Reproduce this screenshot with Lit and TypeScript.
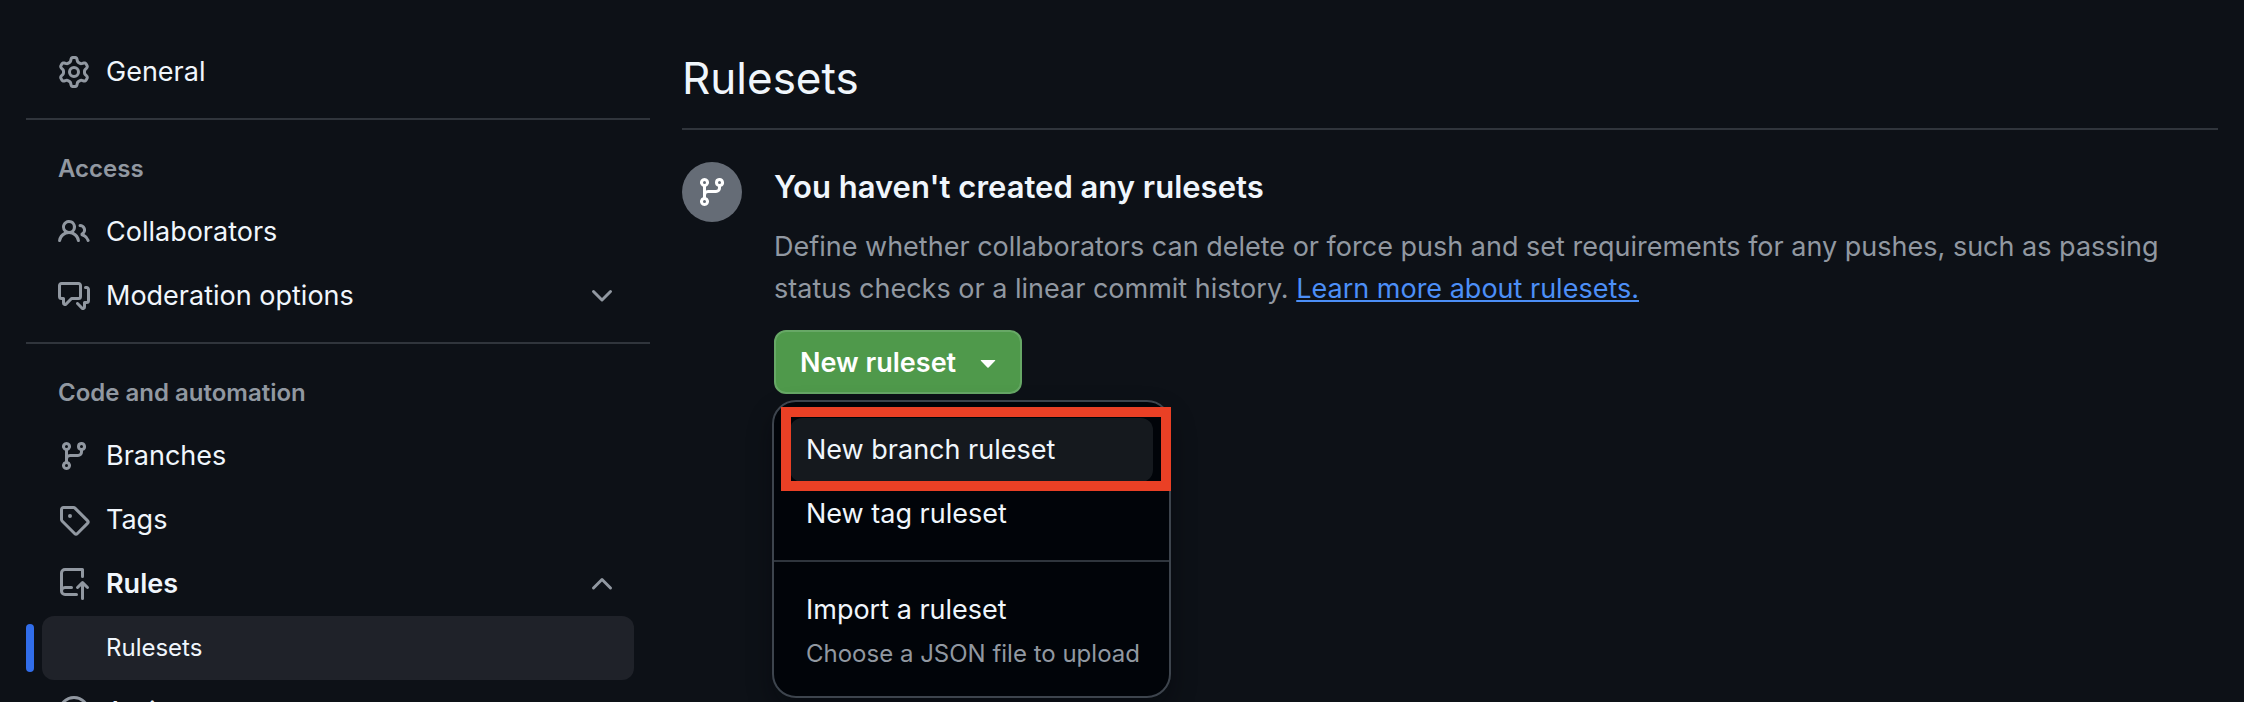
import { LitElement, html, css, svg, nothing } from "lit";
import { customElement, property, state } from "lit/decorators.js";

const ICONS: Record<string, string> = {
  gear: "M8 0a8.2 8.2 0 0 1 .701.031C9.444.095 9.99.645 10.16 1.29l.288 1.107c.018.066.079.158.212.224.231.114.454.243.668.386.123.082.233.09.299.071l1.103-.303c.644-.176 1.392.021 1.82.63.27.385.506.792.704 1.218.315.675.111 1.422-.364 1.891l-.814.806c-.049.048-.098.147-.088.294.016.257.016.515 0 .772-.01.147.038.246.088.294l.814.806c.475.469.679 1.216.364 1.891a7.977 7.977 0 0 1-.704 1.217c-.428.61-1.176.807-1.82.63l-1.102-.302c-.067-.019-.177-.011-.3.071a5.909 5.909 0 0 1-.668.386c-.133.066-.194.158-.211.224l-.29 1.106c-.168.646-.715 1.196-1.458 1.26a8.006 8.006 0 0 1-1.402 0c-.743-.064-1.289-.614-1.458-1.26l-.289-1.106c-.018-.066-.079-.158-.212-.224a5.738 5.738 0 0 1-.668-.386c-.123-.082-.233-.09-.299-.071l-1.103.303c-.644.176-1.392-.021-1.82-.63a8.12 8.12 0 0 1-.704-1.218c-.315-.675-.111-1.422.363-1.891l.815-.806c.05-.048.098-.147.088-.294a6.214 6.214 0 0 1 0-.772c.01-.147-.038-.246-.088-.294l-.815-.806C.635 6.045.431 5.298.746 4.623a7.92 7.92 0 0 1 .704-1.217c.428-.61 1.176-.807 1.82-.63l1.102.302c.067.019.177.011.3-.071.214-.143.437-.272.668-.386.133-.066.194-.158.211-.224l.29-1.106C6.009.645 6.556.095 7.299.03 7.53.01 7.764 0 8 0Zm-.571 1.525c-.036.003-.108.036-.137.146l-.289 1.105c-.147.561-.549.967-.998 1.189-.173.086-.34.183-.5.29-.417.278-.97.423-1.529.27l-1.103-.303c-.109-.03-.175.016-.195.045-.22.312-.412.644-.573.99-.014.031-.021.11.059.19l.815.806c.411.406.562.957.53 1.456a4.709 4.709 0 0 0 0 .582c.032.499-.119 1.05-.53 1.456l-.815.806c-.081.08-.073.159-.059.19.162.346.353.677.573.989.02.03.085.076.195.046l1.102-.303c.56-.153 1.113-.008 1.53.27.161.107.328.204.501.29.447.222.85.629.997 1.189l.289 1.105c.029.109.101.143.137.146a6.6 6.6 0 0 0 1.142 0c.036-.003.108-.036.137-.146l.289-1.105c.147-.561.549-.967.998-1.189.173-.086.34-.183.5-.29.417-.278.97-.423 1.529-.27l1.103.303c.109.029.175-.016.195-.045.22-.313.411-.644.573-.99.014-.031.021-.11-.059-.19l-.815-.806c-.411-.406-.562-.957-.53-1.456a4.709 4.709 0 0 0 0-.582c-.032-.499.119-1.05.53-1.456l.815-.806c.081-.08.073-.159.059-.19a6.464 6.464 0 0 0-.573-.989c-.02-.03-.085-.076-.195-.046l-1.102.303c-.56.153-1.113.008-1.53-.27a4.44 4.44 0 0 0-.501-.29c-.447-.222-.85-.629-.997-1.189l-.289-1.105c-.029-.11-.101-.143-.137-.146a6.6 6.6 0 0 0-1.142 0ZM11 8a3 3 0 1 1-6 0 3 3 0 0 1 6 0ZM9.5 8a1.5 1.5 0 1 0-3.001.001A1.5 1.5 0 0 0 9.5 8Z",
  people:
    "M2 5.5a3.5 3.5 0 1 1 5.898 2.549 5.508 5.508 0 0 1 3.034 4.084.75.75 0 1 1-1.482.235 4 4 0 0 0-7.9 0 .75.75 0 0 1-1.482-.236A5.507 5.507 0 0 1 3.102 8.05 3.493 3.493 0 0 1 2 5.5ZM11 4a3.001 3.001 0 0 1 2.22 5.018 5.01 5.01 0 0 1 2.56 3.012.749.749 0 0 1-.885.954.752.752 0 0 1-.549-.514 3.507 3.507 0 0 0-2.522-2.372.75.75 0 0 1-.574-.73v-.352a.75.75 0 0 1 .416-.672A1.5 1.5 0 0 0 11 5.5.75.75 0 0 1 11 4Zm-5.5-.5a2 2 0 1 0-.001 3.999A2 2 0 0 0 5.5 3.5Z",
  discussion:
    "M1.75 1h8.5c.966 0 1.75.784 1.75 1.75v5.5A1.75 1.75 0 0 1 10.25 10H7.061l-2.574 2.573A1.458 1.458 0 0 1 2 11.543V10h-.25A1.75 1.75 0 0 1 0 8.25v-5.5C0 1.784.784 1 1.75 1ZM1.5 2.75v5.5c0 .138.112.25.25.25h1a.75.75 0 0 1 .75.75v2.19l2.72-2.72a.749.749 0 0 1 .53-.22h3.5a.25.25 0 0 0 .25-.25v-5.5a.25.25 0 0 0-.25-.25h-8.5a.25.25 0 0 0-.25.25Zm13 2a.25.25 0 0 0-.25-.25h-.5a.75.75 0 0 1 0-1.5h.5c.966 0 1.75.784 1.75 1.75v5.5A1.75 1.75 0 0 1 14.25 12H14v1.543a1.458 1.458 0 0 1-2.487 1.03L9.22 12.28a.749.749 0 0 1 .326-1.275.749.749 0 0 1 .734.215l2.22 2.22v-2.19a.75.75 0 0 1 .75-.75h1a.25.25 0 0 0 .25-.25Z",
  branch:
    "M9.5 3.25a2.25 2.25 0 1 1 3 2.122V6A2.5 2.5 0 0 1 10 8.5H6a1 1 0 0 0-1 1v1.128a2.251 2.251 0 1 1-1.5 0V5.372a2.25 2.25 0 1 1 1.5 0v1.836A2.493 2.493 0 0 1 6 7h4a1 1 0 0 0 1-1v-.628A2.25 2.25 0 0 1 9.5 3.25Zm-6 0a.75.75 0 1 0 1.5 0 .75.75 0 0 0-1.5 0Zm8.25-.75a.75.75 0 1 0 0 1.5.75.75 0 0 0 0-1.5ZM4.25 12a.75.75 0 1 0 0 1.5.75.75 0 0 0 0-1.5Z",
  tag: "M1 7.775V2.75C1 1.784 1.784 1 2.75 1h5.025c.464 0 .91.184 1.238.513l6.25 6.25a1.75 1.75 0 0 1 0 2.474l-5.026 5.026a1.75 1.75 0 0 1-2.474 0l-6.25-6.25A1.752 1.752 0 0 1 1 7.775Zm1.5 0c0 .066.026.13.073.177l6.25 6.25a.25.25 0 0 0 .354 0l5.025-5.025a.25.25 0 0 0 0-.354l-6.25-6.25a.25.25 0 0 0-.177-.073H2.75a.25.25 0 0 0-.25.25ZM6 5a1 1 0 1 1 0 2 1 1 0 0 1 0-2Z",
  push: "M1 2.5A2.5 2.5 0 0 1 3.5 0h8.75a.75.75 0 0 1 .75.75v3.5a.75.75 0 0 1-1.5 0V1.5h-8a1 1 0 0 0-1 1v6.708A2.492 2.492 0 0 1 3.5 9h3.25a.75.75 0 0 1 0 1.5H3.5a1 1 0 1 0 0 2h5.75a.75.75 0 0 1 0 1.5H3.5A2.5 2.5 0 0 1 1 11.5v-9Zm13.23 7.79h-.001l-1.224-1.224v6.184a.75.75 0 0 1-1.5 0V9.066L10.28 10.29a.75.75 0 0 1-1.06-1.061l2.505-2.504a.75.75 0 0 1 1.06 0L15.29 9.23a.751.751 0 0 1-.018 1.042.751.751 0 0 1-1.042.018Z",
  play: "M8 0a8 8 0 1 1 0 16A8 8 0 0 1 8 0ZM1.5 8a6.5 6.5 0 1 0 13 0 6.5 6.5 0 0 0-13 0Zm4.879-2.773 4.264 2.559a.25.25 0 0 1 0 .428l-4.264 2.559A.25.25 0 0 1 6 10.559V5.442a.25.25 0 0 1 .379-.215Z",
  down: "M12.78 5.22a.749.749 0 0 1 0 1.06l-4.25 4.25a.749.749 0 0 1-1.06 0L3.22 6.28a.749.749 0 1 1 1.06-1.06L8 8.939l3.72-3.719a.749.749 0 0 1 1.06 0Z",
  up: "M3.22 10.53a.749.749 0 0 1 0-1.06l4.25-4.25a.749.749 0 0 1 1.06 0l4.25 4.25a.749.749 0 1 1-1.06 1.06L8 6.811 4.28 10.53a.749.749 0 0 1-1.06 0Z",
  caret:
    "m4.427 7.427 3.396 3.396a.25.25 0 0 0 .354 0l3.396-3.396A.25.25 0 0 0 11.396 7H4.604a.25.25 0 0 0-.177.427Z",
};

@customElement("oct-icon")
class OctIcon extends LitElement {
  @property() name = "";

  static styles = css`
    :host {
      display: block;
      flex: none;
      width: 32px;
      height: 32px;
    }
    svg {
      display: block;
      width: 100%;
      height: 100%;
      fill: currentColor;
    }
  `;

  render() {
    return html`<svg viewBox="0 0 16 16" aria-hidden="true">
      ${svg`<path d=${ICONS[this.name]}></path>`}
    </svg>`;
  }
}

interface NavItem {
  label: string;
  icon: string;
  open?: boolean;
  children?: string[];
}

interface NavGroup {
  title?: string;
  items: NavItem[];
}

const GROUPS: NavGroup[] = [
  { items: [{ label: "General", icon: "gear" }] },
  {
    title: "Access",
    items: [
      { label: "Collaborators", icon: "people" },
      { label: "Moderation options", icon: "discussion", children: [] },
    ],
  },
  {
    title: "Code and automation",
    items: [
      { label: "Branches", icon: "branch" },
      { label: "Tags", icon: "tag" },
      { label: "Rules", icon: "push", open: true, children: ["Rulesets"] },
      { label: "Actions", icon: "play" },
    ],
  },
];

@customElement("settings-nav")
class SettingsNav extends LitElement {
  static styles = css`
    * {
      box-sizing: border-box;
    }
    :host {
      display: block;
      padding-top: 40px;
    }
    ul {
      list-style: none;
      margin: 0;
      padding: 0;
    }
    .group + .group {
      margin-top: 14px;
      border-top: 2px solid #30353c;
      padding-top: 18px;
    }
    .title {
      margin: 0;
      padding: 0 32px;
      font-size: 24px;
      font-weight: 600;
      line-height: 62px;
      color: #9198a1;
    }
    .item {
      display: flex;
      align-items: center;
      gap: 16px;
      width: calc(100% - 32px);
      min-height: 64px;
      margin: 0 16px;
      padding: 0 16px;
      border: 0;
      border-radius: 12px;
      background: none;
      font: inherit;
      font-size: 27px;
      line-height: 40px;
      color: #f0f6fc;
      text-align: left;
      text-decoration: none;
    }
    .item oct-icon {
      color: #9198a1;
    }
    .label {
      flex: 1;
    }
    .open {
      font-weight: 600;
    }
    .sub {
      display: flex;
      align-items: center;
    }
    .current::before {
      content: "";
      width: 8px;
      height: 48px;
      border-radius: 4px;
      background: #316dea;
    }
    .sub .item {
      flex: 1;
      margin-left: 8px;
      padding-left: 64px;
      background: #1f2229;
      font-size: 24px;
    }
  `;

  private renderItem(item: NavItem) {
    const body = html`<oct-icon name=${item.icon}></oct-icon>
      <span class="label">${item.label}</span>`;
    if (!item.children) {
      return html`<li><a class="item" href="#">${body}</a></li>`;
    }
    return html`<li>
      <button
        class="item ${item.open ? "open" : ""}"
        type="button"
        aria-expanded=${item.open ? "true" : "false"}
      >
        ${body}<oct-icon name=${item.open ? "up" : "down"}></oct-icon>
      </button>
      ${item.open
        ? html`<ul>
            ${item.children.map(
              (child) => html`<li class="sub current">
                <a class="item" href="#" aria-current="page">${child}</a>
              </li>`
            )}
          </ul>`
        : nothing}
    </li>`;
  }

  render() {
    return html`<nav aria-label="Settings">
      ${GROUPS.map(
        (group) => html`<section class="group">
          ${group.title ? html`<h2 class="title">${group.title}</h2>` : nothing}
          <ul>
            ${group.items.map((item) => this.renderItem(item))}
          </ul>
        </section>`
      )}
    </nav>`;
  }
}

@customElement("ruleset-menu")
class RulesetMenu extends LitElement {
  @state() private open = true;

  static styles = css`
    * {
      box-sizing: border-box;
    }
    :host {
      display: block;
      position: relative;
      width: max-content;
    }
    button {
      font: inherit;
      text-align: left;
      cursor: pointer;
    }
    .trigger {
      display: flex;
      align-items: center;
      gap: 16px;
      height: 64px;
      padding: 0 16px 0 24px;
      border: 2px solid #67a866;
      border-radius: 12px;
      background: #4f994b;
      color: #fff;
      font-size: 27px;
      font-weight: 600;
    }
    .menu {
      position: absolute;
      top: calc(100% + 6px);
      left: -2px;
      width: 399px;
      margin: 0;
      padding: 0;
      border: 2px solid #3d444d;
      border-radius: 24px;
      background: #010409;
      box-shadow: 0 12px 24px rgba(1, 4, 9, 0.4);
    }
    .part {
      padding: 16px 16px 14px;
    }
    .part + .part {
      border-top: 2px solid #2f353d;
    }
    .entry {
      display: block;
      width: 100%;
      padding: 12px 16px;
      border: 0;
      border-radius: 12px;
      background: none;
      color: #f0f6fc;
      font-size: 27px;
      line-height: 40px;
      white-space: nowrap;
    }
    .active {
      background: #15191e;
    }
    .note {
      display: block;
      padding-top: 8px;
      color: #9198a1;
      font-size: 24px;
      line-height: 32px;
    }
    .marker {
      position: absolute;
      top: 5px;
      left: 7px;
      right: -2px;
      height: 84px;
      border: 10px solid #ea4025;
      pointer-events: none;
    }
  `;

  render() {
    return html`<button
        class="trigger"
        type="button"
        aria-haspopup="menu"
        aria-expanded=${this.open ? "true" : "false"}
        @click=${() => (this.open = !this.open)}
      >
        New ruleset<oct-icon name="caret"></oct-icon>
      </button>
      ${this.open
        ? html`<div class="menu" role="menu">
            <div class="part">
              <button class="entry active" type="button" role="menuitem">New branch ruleset</button>
              <button class="entry" type="button" role="menuitem">New tag ruleset</button>
            </div>
            <div class="part">
              <button class="entry" type="button" role="menuitem">
                Import a ruleset<span class="note">Choose a JSON file to upload</span>
              </button>
            </div>
            <div class="marker"></div>
          </div>`
        : nothing}`;
  }
}

@customElement("app-root")
class AppRoot extends LitElement {
  static styles = css`
    * {
      box-sizing: border-box;
    }
    :host {
      display: grid;
      grid-template-columns: minmax(auto, 624px) minmax(0, 1fr);
      gap: 32px;
      height: 100vh;
      overflow: hidden;
      box-sizing: border-box;
      padding: 0 26px;
      background: #0d1117;
      color: #f0f6fc;
      font-family: Inter, "Noto Sans", sans-serif;
      font-size: 27px;
    }
    main {
      padding-top: 42px;
    }
    h1 {
      margin: 0;
      padding-bottom: 14px;
      border-bottom: 2px solid #30353c;
      font-size: 44px;
      font-weight: 400;
      line-height: 72px;
    }
    .blank {
      display: flex;
      gap: 32px;
      padding-top: 32px;
    }
    .badge {
      display: flex;
      flex: none;
      align-items: center;
      justify-content: center;
      width: 60px;
      height: 60px;
      border-radius: 50%;
      background: #656c76;
      color: #fff;
    }
    .copy {
      flex: 1;
    }
    h2 {
      margin: 0;
      font-size: 31px;
      font-weight: 600;
      line-height: 50px;
    }
    p {
      margin: 14px 0 20px;
      line-height: 42px;
      color: #9198a1;
    }
    p a {
      color: #4c8ff7;
      text-decoration: underline;
    }
  `;

  render() {
    return html`<settings-nav></settings-nav>
      <main>
        <h1>Rulesets</h1>
        <section class="blank">
          <div class="badge"><oct-icon name="branch"></oct-icon></div>
          <div class="copy">
            <h2>You haven't created any rulesets</h2>
            <p>
              Define whether collaborators can delete or force push and set requirements for any
              pushes, such as passing status checks or a linear commit history.
              <a href="#">Learn more about rulesets.</a>
            </p>
            <ruleset-menu></ruleset-menu>
          </div>
        </section>
      </main>`;
  }
}
